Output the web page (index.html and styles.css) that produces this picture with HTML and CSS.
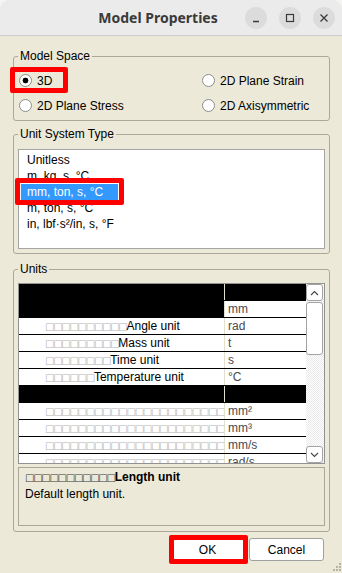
FILE: index.html
```html
<!DOCTYPE html>
<html lang="en">
<head>
    <meta charset="UTF-8">
    <meta name="viewport" content="width=device-width, initial-scale=1.0">
    <title>Model Properties</title>
    <link rel="stylesheet" href="styles.css">
</head>
<body>
    <div class="window">
        <header class="titlebar">
            <div class="title">Model Properties</div>
            <div class="controls">
                <span class="ctl"><svg width="22" height="22" viewBox="0 0 22 22"><path d="M8 14.5h6" stroke="#3a3a3a" stroke-width="1.3"/></svg></span>
                <span class="ctl"><svg width="22" height="22" viewBox="0 0 22 22"><rect x="7.5" y="7.5" width="7" height="7" fill="none" stroke="#3a3a3a" stroke-width="1.2"/></svg></span>
                <span class="ctl"><svg width="22" height="22" viewBox="0 0 22 22"><path d="M7.5 7.5l7 7M14.5 7.5l-7 7" stroke="#3a3a3a" stroke-width="1.3"/></svg></span>
            </div>
        </header>

        <main class="dialog">
            <fieldset class="group space">
                <legend>Model Space</legend>
                <div class="radios">
                    <label class="radio checked"><span class="dot"></span>3D<span class="mark mark-3d"></span></label>
                    <label class="radio"><span class="dot"></span>2D Plane Strain</label>
                    <label class="radio"><span class="dot"></span>2D Plane Stress</label>
                    <label class="radio"><span class="dot"></span>2D Axisymmetric</label>
                </div>
            </fieldset>

            <fieldset class="group unitsys">
                <legend>Unit System Type</legend>
                <ul class="listbox">
                    <li><span>Unitless</span></li>
                    <li><span>m, kg, s, °C</span></li>
                    <li class="selected"><span>mm, ton, s, °C<i class="mark mark-sel"></i></span></li>
                    <li><span>m, ton, s, °C</span></li>
                    <li><span>in, lbf·s²/in, s, °F</span></li>
                </ul>
            </fieldset>

            <fieldset class="group units">
                <legend>Units</legend>
                <div class="grid">
                    <div class="rows">
                        <div class="row black"><div class="c1"></div><div class="c2"></div></div>
                        <div class="row"><div class="c1 black"></div><div class="c2">mm</div></div>
                        <div class="row"><div class="c1"><span class="tofu">□□□□□□□□□□</span>Angle unit</div><div class="c2">rad</div></div>
                        <div class="row"><div class="c1"><span class="tofu">□□□□□□□□□</span>Mass unit</div><div class="c2">t</div></div>
                        <div class="row"><div class="c1"><span class="tofu">□□□□□□□□</span>Time unit</div><div class="c2">s</div></div>
                        <div class="row"><div class="c1"><span class="tofu">□□□□□□</span>Temperature unit</div><div class="c2">°C</div></div>
                        <div class="row black"><div class="c1"></div><div class="c2"></div></div>
                        <div class="row"><div class="c1"><span class="tofu">□□□□□□□□□□□□□□□□□□□□□□</span></div><div class="c2">mm²</div></div>
                        <div class="row"><div class="c1"><span class="tofu">□□□□□□□□□□□□□□□□□□□□□□</span></div><div class="c2">mm³</div></div>
                        <div class="row"><div class="c1"><span class="tofu">□□□□□□□□□□□□□□□□□□□□□□</span></div><div class="c2">mm/s</div></div>
                        <div class="row"><div class="c1"><span class="tofu">□□□□□□□□□□□□□□□□□□□□□□</span></div><div class="c2">rad/s</div></div>
                    </div>
                    <div class="scrollbar">
                        <span class="sb-btn"><svg width="9" height="6" viewBox="0 0 9 6"><path d="M1 5l3.5-3.5L8 5" fill="none" stroke="#444" stroke-width="1.1"/></svg></span>
                        <span class="sb-thumb"></span>
                        <span class="sb-track"></span>
                        <span class="sb-btn"><svg width="9" height="6" viewBox="0 0 9 6"><path d="M1 1l3.5 3.5L8 1" fill="none" stroke="#444" stroke-width="1.1"/></svg></span>
                    </div>
                </div>
                <div class="desc">
                    <div class="desc-title"><span class="tofu">□□□□□□□□□□□</span>Length unit</div>
                    <div>Default length unit.</div>
                </div>
            </fieldset>

            <div class="buttons">
                <button class="btn">OK<i class="mark mark-ok"></i></button>
                <button class="btn">Cancel</button>
            </div>
        </main>

        <svg class="grip" width="8" height="8" viewBox="0 0 8 8">
            <rect x="6" y="0" width="2" height="2" fill="#b5b2a6"/>
            <rect x="3" y="3" width="2" height="2" fill="#b5b2a6"/>
            <rect x="6" y="3" width="2" height="2" fill="#b5b2a6"/>
            <rect x="0" y="6" width="2" height="2" fill="#b5b2a6"/>
            <rect x="3" y="6" width="2" height="2" fill="#b5b2a6"/>
            <rect x="6" y="6" width="2" height="2" fill="#b5b2a6"/>
        </svg>
    </div>
</body>
</html>
```

FILE: styles.css
```css
* {
    box-sizing: border-box;
}
html, body {
    margin: 0;
    background: #f4f4f4;
}
body {
    width: 342px;
    height: 573px;
    overflow: hidden;
    font-family: "Liberation Sans", Arial, sans-serif;
    font-size: 12px;
    color: #000;
}
.window {
    position: relative;
    height: 573px;
    background: #ece9d8;
    border-radius: 10px 10px 0 0;
    overflow: hidden;
}
.titlebar {
    height: 36px;
    display: flex;
    align-items: center;
    background: #ebebeb;
    border-bottom: 1px solid #cdcdcd;
}
.title {
    flex: 1;
    padding-left: 71px;
    text-align: center;
    font-family: "Noto Sans", sans-serif;
    font-weight: 700;
    font-size: 14px;
    color: #3a3a3a;
}
.controls {
    display: flex;
    gap: 12px;
    padding-right: 7px;
}
.ctl {
    width: 22px;
    height: 22px;
    border-radius: 50%;
    background: #dcdcdc;
    display: flex;
}

.dialog {
    padding: 13px 12px 0 13px;
}
.group {
    margin: 0;
    padding: 0 4px 4px;
    border: 1px solid #aca899;
    border-radius: 3px;
    min-width: 0;
}
.group legend {
    padding: 0 2px;
    line-height: 14px;
}
.space {
    padding-top: 5px;
    padding-bottom: 2px;
}
.unitsys {
    margin-top: 6px;
    padding-top: 8px;
}
.units {
    margin-top: 8px;
    padding-top: 7px;
    padding-bottom: 5px;
}

/* radio buttons */
.radios {
    display: grid;
    grid-template-columns: 183px 1fr;
    grid-auto-rows: 25px;
}
.radio {
    position: relative;
    display: flex;
    align-items: center;
    gap: 5px;
    padding-left: 1px;
}
.dot {
    width: 13px;
    height: 13px;
    border-radius: 50%;
    border: 1px solid #8d8d8d;
    background: #fff;
}
.checked .dot {
    background: radial-gradient(circle, #000 0 2.6px, #fff 3.2px);
}

/* red annotation frames */
.mark {
    position: absolute;
    border: 5px solid #ff0000;
    border-radius: 2px;
}
.mark-3d {
    left: -8px;
    top: -1px;
    width: 58px;
    height: 26px;
}
.mark-sel {
    left: -6px;
    top: -6px;
    width: 109px;
    height: 27px;
}
.mark-ok {
    left: -2px;
    top: -4px;
    width: 79px;
    height: 29px;
}

/* list */
.listbox {
    height: 100px;
    margin: 0;
    padding: 2px 0 0 2px;
    list-style: none;
    background: #fff;
    border: 1px solid #a5a5a5;
}
.listbox li {
    height: 16px;
    line-height: 16px;
}
.listbox span {
    display: inline-block;
    padding: 0 6px;
}
.listbox .selected span {
    position: relative;
    padding-right: 15px;
    background: #3399ff;
    color: #fff;
}

/* units grid */
.grid {
    display: flex;
    height: 181px;
    border: 1px solid #929292;
    background: #fff;
}
.rows {
    flex: 1;
    overflow: hidden;
}
.row {
    display: flex;
    height: 17px;
    line-height: 17px;
    border-bottom: 1px solid #000;
}
.c1 {
    width: 206px;
    padding-left: 26px;
    border-right: 1px solid #e2dfcf;
    white-space: nowrap;
    overflow: hidden;
}
.c2 {
    flex: 1;
    padding-left: 3px;
    color: #4a4a4a;
}
.black, .black .c1, .black .c2 {
    background: #000;
}
.tofu {
    font-family: "DejaVu Sans", sans-serif;
    font-size: 10px;
    letter-spacing: -1.3px;
    color: #b4b4b4;
}
.scrollbar {
    width: 18px;
    display: flex;
    flex-direction: column;
    background: repeating-conic-gradient(#ffffff 0 25%, #e9e9e9 0 50%) 0 0 / 2px 2px;
}
.sb-btn, .sb-thumb {
    width: 17px;
    background: #fff;
    border: 1px solid #a3a3a3;
    border-radius: 3px;
}
.sb-btn {
    height: 17px;
    display: flex;
    align-items: center;
    justify-content: center;
}
.sb-thumb {
    height: 53px;
    margin-top: 1px;
}
.sb-track {
    flex: 1;
}

/* description */
.desc {
    height: 59px;
    margin-top: 3px;
    padding: 1px 6px;
    line-height: 17px;
    border: 1px solid #aca899;
}
.desc-title {
    font-weight: 700;
}
.desc .tofu {
    color: #3a3a3a;
    font-weight: 400;
}

/* buttons */
.buttons {
    display: flex;
    justify-content: flex-end;
    gap: 4px;
    margin-top: 6px;
    padding-right: 6px;
}
.btn {
    position: relative;
    width: 75px;
    height: 23px;
    padding: 0;
    font-family: inherit;
    font-size: 12px;
    color: #000;
    background: #fff;
    border: 1px solid #a0a0a0;
    border-radius: 3px;
}
.grip {
    position: absolute;
    right: 1px;
    bottom: 2px;
}
```
